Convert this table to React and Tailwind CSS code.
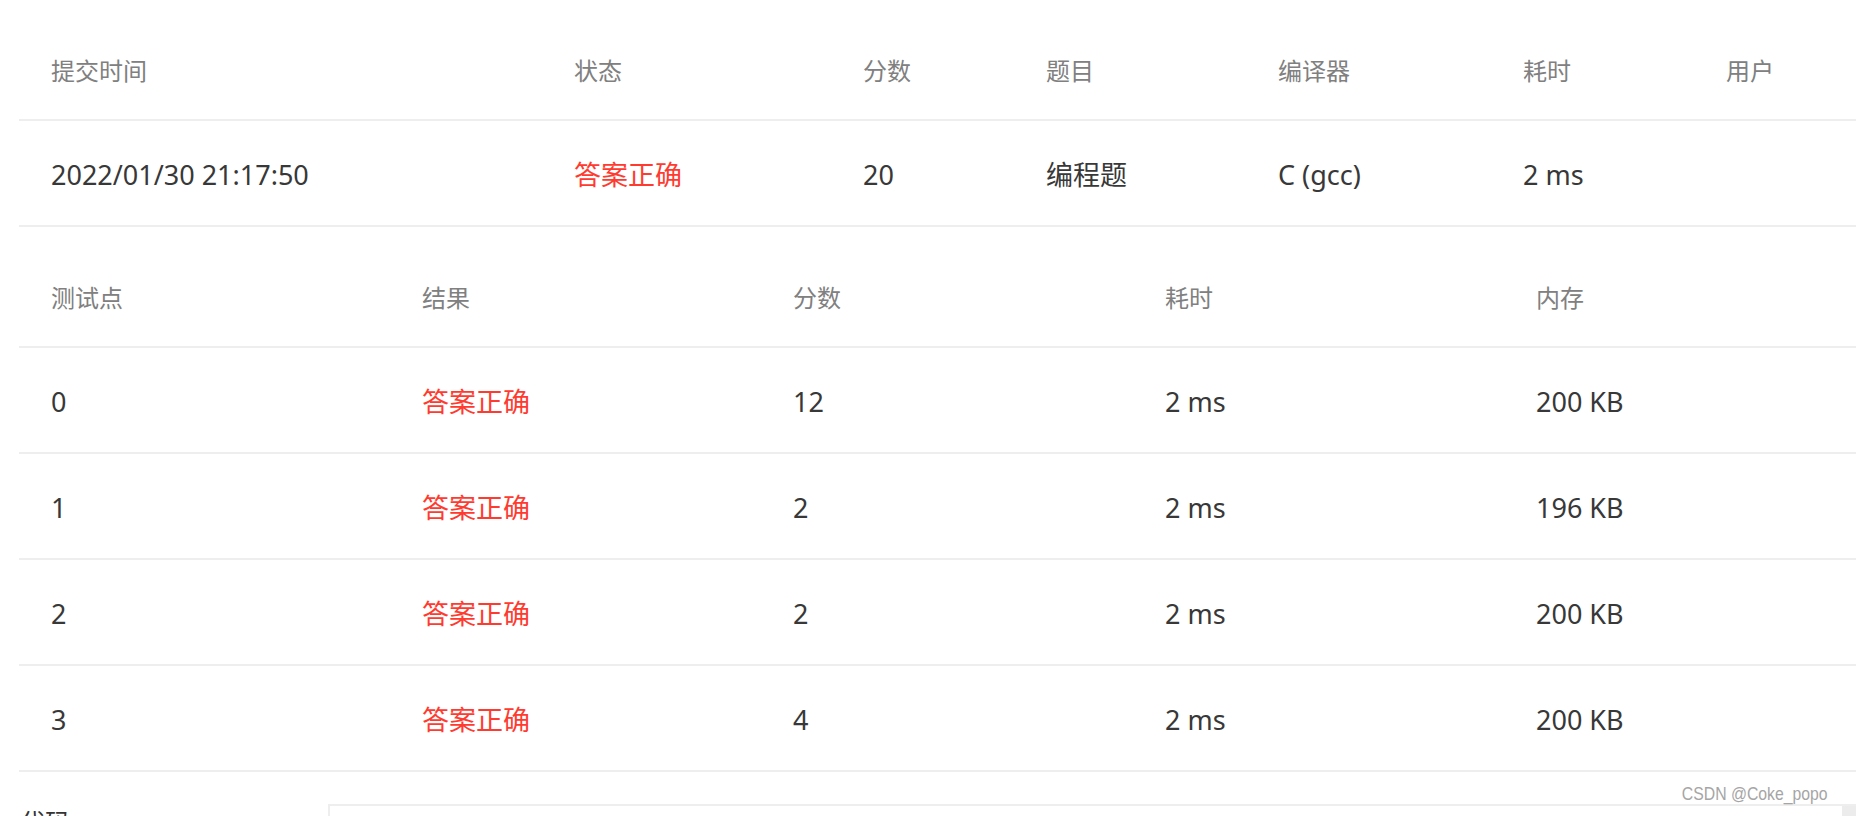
const summaryCols = [523, 289, 183, 232, 245, 203];
const caseCols = [371, 371, 372, 371];

const summaryHead = ["提交时间", "状态", "分数", "题目", "编译器", "耗时", "用户"];
const summaryRow = ["2022/01/30 21:17:50", "答案正确", "20", "编程题", "C (gcc)", "2 ms", ""];

const caseHead = ["测试点", "结果", "分数", "耗时", "内存"];
const caseRows = [
  ["0", "答案正确", "12", "2 ms", "200 KB"],
  ["1", "答案正确", "2", "2 ms", "196 KB"],
  ["2", "答案正确", "2", "2 ms", "200 KB"],
  ["3", "答案正确", "4", "2 ms", "200 KB"],
];

// one table row; the last column just takes whatever is left
const Row = ({ cells, widths, head }) => (
  <div
    className={`flex items-center border-b-2 border-[#eeeeee] ${
      head ? "h-[98px] text-[24px] text-[#808080]" : "h-[106px] pt-[5px] text-[27px] text-[#383838]"
    }`}
  >
    {cells.map((text, i) => (
      <div
        key={i}
        style={i < widths.length ? { width: widths[i] } : undefined}
        className={`shrink-0 whitespace-nowrap pl-[32px] ${
          i === widths.length ? "flex-1" : ""
        } ${!head && text === "答案正确" ? "text-[#ff3b30]" : ""}`}
      >
        {text}
      </div>
    ))}
  </div>
);

const App = () => {
  return (
    <div className="relative h-[816px] w-full overflow-hidden bg-white pl-[19px] font-['Noto_Sans','Noto_Sans_CJK_SC',sans-serif] leading-normal">
      {/* submission summary */}
      <div className="pt-[23px]">
        <Row cells={summaryHead} widths={summaryCols} head />
        <Row cells={summaryRow} widths={summaryCols} />
      </div>

      {/* test cases */}
      <div className="pt-[23px]">
        <Row cells={caseHead} widths={caseCols} head />
        {caseRows.map((r) => (
          <Row key={r[0]} cells={r} widths={caseCols} />
        ))}
      </div>

      {/* code */}
      <div className="mt-[32px] flex items-start">
        <div className="w-[309px] shrink-0 pl-[1px] text-[25px] text-[#333333]">代码</div>
        <div className="flex h-[60px] flex-1 border-l-2 border-t-2 border-[#eeeeee]">
          <div className="flex-1" />
          <div className="w-[14px] bg-[#ececec]" />
        </div>
      </div>

      <div className="absolute right-[28px] top-[784px] origin-right scale-x-[0.83] font-['Liberation_Sans',sans-serif] text-[19px] leading-none text-[#a5a5a5]">
        CSDN @Coke_popo
      </div>
    </div>
  );
};

export default App;
